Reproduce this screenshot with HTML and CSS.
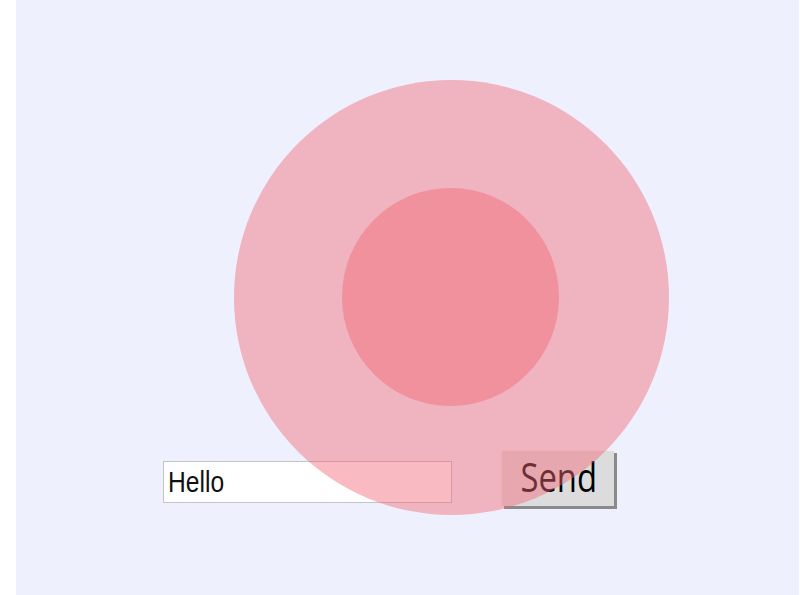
FILE: index.html
```html
<!DOCTYPE html>
<html lang="en">
<head>
<meta charset="utf-8">
<title>Send</title>
<link rel="stylesheet" href="styles.css">
</head>
<body>
<main class="canvas">
  <form class="composer" onsubmit="return false">
    <div class="field"><span class="field-text">Hello</span></div>
    <button class="send" type="button"><span class="send-text">Send</span></button>
  </form>
  <div class="ring outer"></div>
  <div class="ring inner"></div>
</main>
</body>
</html>
```

FILE: styles.css
```css
html, body {
  margin: 0;
  padding: 0;
  background: #ffffff;
}

.canvas {
  position: relative;
  margin-left: 16px;
  width: 783px;
  height: 595px;
  background: #eef0fe;
  padding: 450px 0 0 147px;
  box-sizing: border-box;
  overflow: hidden;
}

.composer {
  display: flex;
  align-items: flex-start;
  gap: 49px;
  margin: 0;
}

.field {
  margin-top: 11px;
  width: 289px;
  height: 42px;
  box-sizing: border-box;
  border: 1px solid #c4c4c4;
  background: #ffffff;
  display: flex;
  align-items: center;
  padding-left: 4px;
  overflow: hidden;
}

.field-text {
  display: inline-block;
  font-family: "Liberation Sans", Arial, sans-serif;
  font-size: 30px;
  line-height: 36px;
  color: #111111;
  transform: scaleX(0.82);
  transform-origin: left center;
  white-space: nowrap;
}

.send {
  width: 113px;
  height: 56px;
  margin: 0;
  padding: 0;
  border: none;
  border-top: 1px solid #eeeeee;
  border-left: 1px solid #eeeeee;
  background: #dcdcdc;
  box-shadow: 3px 3px 0 #8a8a8a;
  display: flex;
  align-items: center;
  justify-content: center;
  cursor: pointer;
}

.send-text {
  display: inline-block;
  font-family: "Open Sans", "Noto Sans", sans-serif;
  font-size: 40px;
  font-weight: 500;
  line-height: 48px;
  color: #000000;
  transform: scaleX(0.82);
  margin-top: -4px;
  margin-left: 2px;
}

.ring {
  position: absolute;
  border-radius: 50%;
  background: rgba(242, 104, 118, 0.45);
  pointer-events: none;
}

.outer {
  left: 218px;
  top: 80px;
  width: 435px;
  height: 435px;
}

.inner {
  left: 326px;
  top: 188px;
  width: 217px;
  height: 218px;
}
```
